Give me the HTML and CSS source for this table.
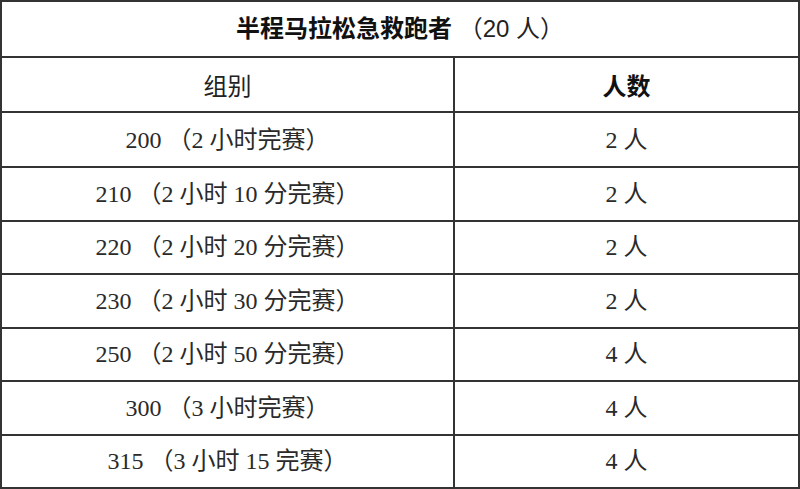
FILE: index.html
```html
<!DOCTYPE html>
<html lang="zh-CN">
<head>
<meta charset="utf-8">
<title>半程马拉松急救跑者</title>
<link rel="stylesheet" href="styles.css">
</head>
<body>
<div class="table">
  <div class="cell title"><span class="title-main">半程马拉松急救跑者</span>&nbsp;<span class="title-count">（20 人）</span></div>
  <div class="cell head">组别</div>
  <div class="cell head strong">人数</div>
  <div class="cell">200 （2 小时完赛）</div>
  <div class="cell">2 人</div>
  <div class="cell">210 （2 小时 10 分完赛）</div>
  <div class="cell">2 人</div>
  <div class="cell">220 （2 小时 20 分完赛）</div>
  <div class="cell">2 人</div>
  <div class="cell">230 （2 小时 30 分完赛）</div>
  <div class="cell">2 人</div>
  <div class="cell">250 （2 小时 50 分完赛）</div>
  <div class="cell">4 人</div>
  <div class="cell">300 （3 小时完赛）</div>
  <div class="cell">4 人</div>
  <div class="cell">315 （3 小时 15 完赛）</div>
  <div class="cell">4 人</div>
</div>
</body>
</html>
```

FILE: styles.css
```css
html, body {
  margin: 0;
  padding: 0;
  background: #ffffff;
}

.table {
  width: 800px;
  height: 489px;
  box-sizing: border-box;
  display: grid;
  grid-template-columns: 453px 345px;
  grid-template-rows: 56px 55px 55px repeat(6, 53.5px);
  border-top: 2px solid #333;
  border-left: 2px solid #333;
  font-family: "Liberation Serif", "Noto Sans CJK SC", serif;
  font-size: 24px;
  color: #2a2a2a;
}

.cell {
  box-sizing: border-box;
  border-right: 2px solid #333;
  border-bottom: 2px solid #333;
  display: flex;
  align-items: center;
  justify-content: center;
  white-space: nowrap;
  line-height: 1;
}

.title {
  grid-column: 1 / 3;
  font-family: "Liberation Sans", "Noto Sans CJK SC", sans-serif;
  color: #111;
}

.title-main {
  font-weight: 700;
}

.title-count {
  font-weight: 400;
  color: #222;
}

.head {
  font-family: "Noto Sans CJK SC", sans-serif;
  color: #222;
}

.strong {
  font-weight: 700;
  color: #111;
}
```
